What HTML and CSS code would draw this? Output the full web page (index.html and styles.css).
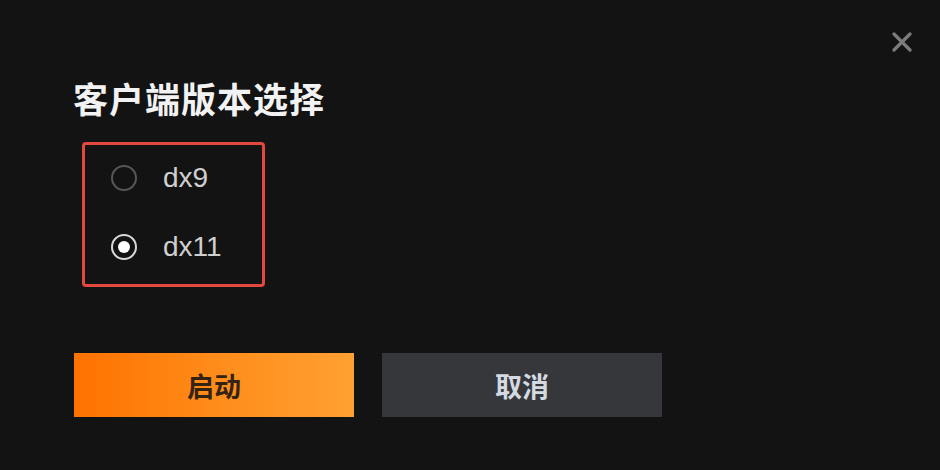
FILE: index.html
```html
<!DOCTYPE html>
<html lang="zh-CN">
<head>
<meta charset="utf-8">
<title>客户端版本选择</title>
<link rel="stylesheet" href="styles.css">
</head>
<body>
<div class="dialog">
  <button class="close" aria-label="关闭">
    <svg width="20" height="20" viewBox="0 0 20 20"><path d="M2 2L18 18M18 2L2 18" stroke="#7c7c7c" stroke-width="3.2" stroke-linecap="round"/></svg>
  </button>
  <h1 class="title">客户端版本选择</h1>
  <div class="options">
    <label class="option"><span class="radio"></span><span class="label">dx9</span></label>
    <label class="option"><span class="radio checked"></span><span class="label">dx11</span></label>
  </div>
  <div class="actions">
    <button class="btn primary">启动</button>
    <button class="btn secondary">取消</button>
  </div>
</div>
</body>
</html>
```
FILE: styles.css
```css
html, body {
  margin: 0;
  padding: 0;
  background: #131313;
}
body {
  width: 940px;
  height: 470px;
  overflow: hidden;
  font-family: "Noto Sans CJK SC", "Noto Sans", sans-serif;
}
.dialog {
  position: relative;
  box-sizing: border-box;
  height: 470px;
  padding: 77px 0 0 74px;
  display: flex;
  flex-direction: column;
  align-items: flex-start;
}
.close {
  position: absolute;
  top: 32px;
  right: 28px;
  width: 20px;
  height: 20px;
  padding: 0;
  border: 0;
  background: none;
  display: block;
}
.close svg { display: block; }
.title {
  margin: 0 0 0 -1px;
  font-size: 35px;
  line-height: 42px;
  font-weight: 700;
  color: #f2f2f2;
  letter-spacing: 1px;
}
.options {
  margin: 23px 0 0 8px;
  width: 183px;
  height: 145px;
  box-sizing: border-box;
  border: 3px solid #e2483e;
  border-radius: 4px;
  padding: 18px 0 0 26px;
  display: flex;
  flex-direction: column;
  gap: 39px;
}
.option {
  display: flex;
  align-items: center;
  height: 30px;
}
.radio {
  width: 26px;
  height: 26px;
  box-sizing: border-box;
  border: 2px solid #575757;
  border-radius: 50%;
  display: flex;
  align-items: center;
  justify-content: center;
}
.radio.checked {
  border-color: #d8d8d8;
}
.radio.checked::after {
  content: "";
  width: 12px;
  height: 12px;
  border-radius: 50%;
  background: #ffffff;
}
.label {
  margin-left: 26px;
  font-family: "Liberation Sans", Arial, sans-serif;
  font-size: 28px;
  color: #cfcfcf;
}
.actions {
  margin-top: 66px;
  display: flex;
  gap: 28px;
}
.btn {
  width: 280px;
  height: 64px;
  border: 0;
  padding: 0;
  font-family: "Noto Sans CJK SC", sans-serif;
  font-size: 27px;
  font-weight: 700;
}
.primary {
  background: linear-gradient(90deg, #ff7200 0%, #ff8e1c 55%, #ffa132 100%);
  color: #352311;
}
.secondary {
  background: #36373b;
  color: #d4dae2;
}
```
